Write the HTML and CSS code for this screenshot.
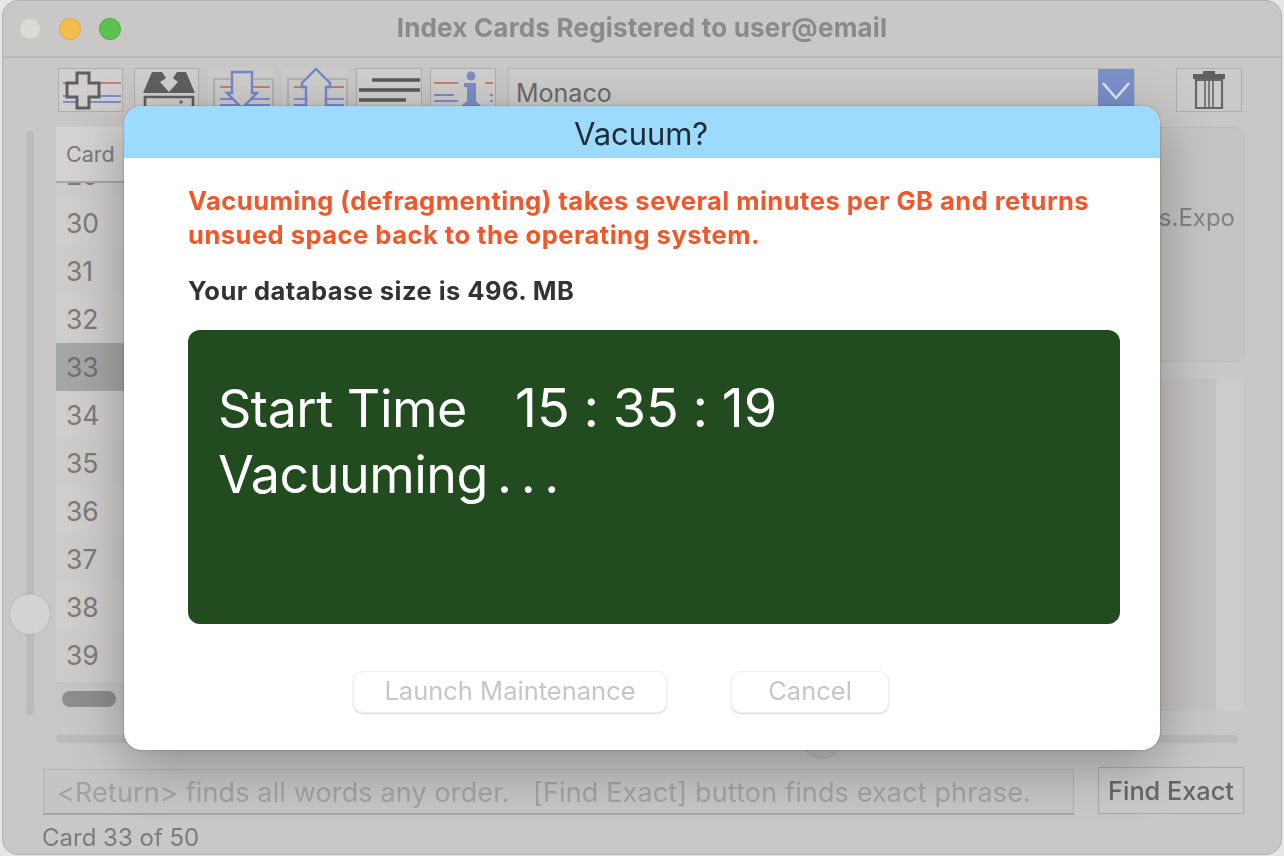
FILE: index.html
```html
<!DOCTYPE html>
<html lang="en">
<head>
<meta charset="utf-8">
<title>Index Cards</title>
<link rel="stylesheet" href="styles.css">
</head>
<body>
<div class="window">
  <header class="titlebar">
    <div class="lights"><span class="light close"></span><span class="light min"></span><span class="light max"></span></div>
    <div class="wintitle">Index Cards Registered to user@email</div>
  </header>
  <div class="toolbar">
    <div class="tools">
      <button class="tool boxed first">
        <svg width="64" height="42" viewBox="0 0 64 42"><path d="M4 14H62" class="red"/><path d="M4 27H62M4 33H62" class="blue"/><path d="M18 4H30V14H40V28H30V39H18V28H8V14H18Z" class="plus"/></svg>
      </button>
      <button class="tool boxed second">
        <svg width="64" height="42" viewBox="0 0 64 42"><path d="M17 3H27L31 9L25 13L34 23L43 13L38 9L42 3H51L60 24H8Z" class="solid"/><path d="M10 42V28H58V42" class="box"/><circle cx="46" cy="33" r="1.8" fill="#9a5a52"/></svg>
      </button>
      <button class="tool plain">
        <svg width="66" height="44" viewBox="0 0 66 44"><path d="M6 44V11H65V44" class="page"/><path d="M12 19H62" class="red"/><path d="M12 31H62M12 37H62" class="blue"/><path d="M24 4H44V25H49L34 40L19 25H24Z" class="arrow"/></svg>
      </button>
      <button class="tool plain">
        <svg width="66" height="44" viewBox="0 0 66 44"><path d="M6 44V11H65V44" class="page"/><path d="M12 19H62" class="red"/><path d="M12 31H62M12 37H62" class="blue"/><path d="M34 1L48 15V19H44V44H24V19H20V15Z" class="arrow"/></svg>
      </button>
      <button class="tool boxed full">
        <svg width="64" height="42" viewBox="0 0 64 42"><path d="M15 11H63M2 21H63M2 31H49" class="lines"/></svg>
      </button>
      <button class="tool boxed full">
        <svg width="64" height="42" viewBox="0 0 64 42"><path d="M3 14H27M54 14H62" class="red"/><path d="M3 26H23M3 32H27M59 26H62M59 32H62" class="blue"/><circle cx="40" cy="7" r="4.5" fill="#7f8cc8"/><path d="M33 14H45V32L51 38V42H29V38L36 32V18H33Z" fill="#7f8cc8"/></svg>
      </button>
    </div>
    <div class="combo">
      <span class="combo-text">Monaco</span>
      <span class="combo-arrow"><svg width="36" height="38" viewBox="0 0 36 38"><path d="M5 14L18 29L31 14" fill="none" stroke="#dfe5f4" stroke-width="2.6"/></svg></span>
    </div>
    <button class="trash">
      <svg width="34" height="38" viewBox="0 0 34 38"><path d="M1 3H33V8H1Z M11 0H23V3H11Z" fill="#5f5f5f"/><path d="M4 9H30V37H4Z" fill="none" stroke="#666" stroke-width="2.2"/><path d="M13 9V36M17 9V36M21 9V36" stroke="#666" stroke-width="1.6"/></svg>
    </button>
  </div>
  <main class="workspace">
    <div class="vslider"><span class="vknob"></span></div>
    <section class="table">
      <div class="cardcol">
        <div class="colhead">Card</div>
        <div class="rowsclip">
          <div class="rows">
            <div class="row">29</div>
            <div class="row">30</div>
            <div class="row">31</div>
            <div class="row">32</div>
            <div class="row sel">33</div>
            <div class="row">34</div>
            <div class="row">35</div>
            <div class="row">36</div>
            <div class="row">37</div>
            <div class="row">38</div>
            <div class="row">39</div>
          </div>
        </div>
        <div class="hscroll"><span class="pill"></span></div>
      </div>
      <div class="right">
        <div class="upper"><span class="upper-text">s.Expo</span></div>
        <div class="lower"><div class="lower-strip"></div></div>
      </div>
    </section>
  </main>
  <div class="hslider"><span class="hknob"></span></div>
  <div class="searchrow">
    <div class="search">&lt;Return&gt; finds all words any order. &nbsp; [Find Exact] button finds exact phrase.</div>
    <button class="find">Find Exact</button>
  </div>
  <div class="status">Card 33 of 50</div>
</div>

<div class="dialog">
  <div class="dialog-head">Vacuum?</div>
  <div class="dialog-body">
    <p class="warn">Vacuuming (defragmenting) takes several minutes per GB and returns<br>unsued space back to the operating system.</p>
    <p class="size">Your database size is 496. MB</p>
    <div class="console">
      <div class="console-line start">Start Time <span class="clock">15 : 35 : 19</span></div>
      <div class="console-line vac">Vacuuming . . .</div>
    </div>
    <div class="actions">
      <button class="btn wide">Launch Maintenance</button>
      <button class="btn narrow">Cancel</button>
    </div>
  </div>
</div>
</body>
</html>
```

FILE: styles.css
```css
* { box-sizing: border-box; }
html, body { margin: 0; height: 100%; }
body {
  width: 1284px;
  height: 856px;
  overflow: hidden;
  background: #e6e6e6;
  font-family: Inter, "Liberation Sans", sans-serif;
  padding: 0 2px 1px;
  position: relative;
}
button { font-family: inherit; padding: 0; margin: 0; }

.window {
  width: 1280px;
  height: 855px;
  background: #c9c8c6;
  border: 1px solid #b2b2b0;
  border-radius: 16px;
  overflow: hidden;
  display: flex;
  flex-direction: column;
  filter: blur(.55px);
}

.titlebar {
  height: 57px;
  flex: none;
  border-bottom: 2px solid #bab9b7;
  display: flex;
  align-items: center;
  position: relative;
  padding-left: 16px;
}
.lights { display: flex; gap: 18px; }
.light { width: 22px; height: 22px; border-radius: 50%; border: 1px solid rgba(0,0,0,.08); }
.close { background: #dcdad7; }
.min { background: #f3bd4c; }
.max { background: #5cc14f; }
.wintitle {
  position: absolute;
  left: 0; right: 0; top: 12px;
  text-align: center;
  font-size: 26px;
  letter-spacing: .2px;
  line-height: 30px;
  font-weight: 700;
  color: #8a8a88;
}

.toolbar {
  height: 69px;
  flex: none;
  display: flex;
  align-items: flex-start;
  padding: 10px 0 0 55px;
}
.tools { display: flex; gap: 8px; }
.tool { width: 66px; height: 44px; background: #d0cfcd; display: block; border: 0; overflow: hidden; flex: none; }
.tool svg { display: block; }
.tool.boxed { border: 1px solid #aeaeac; width: 65px; }
.tool.boxed.full { width: 66px; }
.tool.first { margin-right: 3px; }
.tool.second { margin-right: 1px; }
.tool.plain { background: #cdccca; }
.red { stroke: #c77f70; stroke-width: 2.2; fill: none; }
.blue { stroke: #7f8cd0; stroke-width: 2.2; fill: none; }
.plus { fill: #d0cfcd; stroke: #5f5f5f; stroke-width: 3; }
.solid { fill: #5f5f5f; }
.box { fill: none; stroke: #5f5f5f; stroke-width: 2.6; }
.page { fill: none; stroke: #aaa; stroke-width: 1.5; }
.arrow { fill: #cfcecc; stroke: #7486cf; stroke-width: 2.4; }
.lines { stroke: #5a5a5a; stroke-width: 3.6; fill: none; }

.combo {
  width: 627px;
  height: 44px;
  margin-left: 12px;
  background: #cecdcb;
  border: 1px solid #b9b8b6;
  display: flex;
  justify-content: space-between;
  color: #6a6a6a;
  font-size: 25px;
}
.combo-text { padding: 9px 0 0 7px; line-height: 30px; }
.combo-arrow { width: 36px; height: 44px; background: #7b91cb; flex: none; }
.combo-arrow svg { display: block; }
.trash {
  width: 66px;
  height: 44px;
  margin-left: 41px;
  background: #cccbc9;
  border: 1px solid #aeaeac;
  display: flex;
  align-items: center;
  justify-content: center;
}

.workspace {
  flex: none;
  height: 588px;
  display: flex;
  padding-left: 23px;
}
.vslider {
  width: 8px;
  height: 584px;
  margin-top: 4px;
  background: #bcbbba;
  border-radius: 4px;
  position: relative;
  flex: none;
}
.vknob {
  position: absolute;
  left: -16px;
  top: 463px;
  width: 40px;
  height: 40px;
  border-radius: 50%;
  background: #d4d3d2;
  box-shadow: 0 0 2px rgba(0,0,0,.2);
}
.table {
  margin-left: 22px;
  width: 1189px;
  height: 584px;
  display: flex;
}
.cardcol { width: 120px; height: 584px; display: flex; flex-direction: column; flex: none; }
.colhead {
  height: 56px;
  flex: none;
  background: #d4d3d1;
  border-bottom: 2px solid #a8a8a7;
  padding: 13px 0 0 10px;
  font-size: 21.5px;
  line-height: 28px;
  color: #7c7c7c;
}
.rowsclip { flex: none; height: 500px; overflow: hidden; background: #cdccca; }
.rows { margin-top: -32px; }
.row {
  height: 48px;
  padding-left: 10px;
  line-height: 48px;
  font-size: 26.5px;
  color: #7b7b7b;
}
.row:nth-child(even) { background: #cfcecc; }
.row.sel { background: #a6a6a5; color: #717171; }
.hscroll { height: 28px; background: #c8c7c5; border-top: 1px solid #bdbcba; padding: 7px 0 0 6px; flex: none; }
.pill { display: block; width: 54px; height: 16px; border-radius: 8px; background: #8e8e8d; }

.right { flex: 1; display: flex; flex-direction: column; margin-left: 40px; gap: 16px; }
.upper {
  height: 235px;
  flex: none;
  background: #c5c4c2;
  border: 1px solid #bfbebc;
  border-radius: 0 10px 10px 0;
  text-align: right;
  padding: 75px 9px 0 0;
  font-size: 24px;
  line-height: 30px;
  color: #828282;
}
.lower { height: 333px; flex: none; background: #c4c3c1; display: flex; justify-content: flex-end; padding-right: 1px; }
.lower-strip { width: 28px; background: #cdcccb; }

.hslider {
  flex: none;
  width: 1182px;
  height: 8px;
  margin: 20px 0 0 53px;
  background: #bcbbba;
  border-radius: 4px;
  position: relative;
}
.hknob {
  position: absolute;
  left: 747px;
  top: -15px;
  width: 38px;
  height: 38px;
  border-radius: 50%;
  background: #c0c0bf;
  box-shadow: 0 0 2px rgba(0,0,0,.35);
}

.searchrow { flex: none; display: flex; margin: 24px 0 0 40px; height: 47px; align-items: flex-start; }
.search {
  width: 1031px;
  height: 46px;
  margin-top: 2px;
  border: 1px solid #b4b3b1;
  border-bottom: 2px solid #a5a5a4;
  padding: 0 0 0 13px;
  line-height: 45px;
  font-size: 27px;
  letter-spacing: .14px;
  color: #a2a2a1;
  white-space: nowrap;
  background: #c6c5c3;
}
.find {
  width: 146px;
  height: 47px;
  margin-left: 24px;
  border: 1px solid #a9a9a8;
  background: #cac9c7;
  color: #666;
  font-size: 25.3px;
  font-weight: 500;
}
.status {
  flex: none;
  margin: 9px 0 0 39px;
  font-size: 24px;
  line-height: 30px;
  color: #7b7b7b;
}

.dialog {
  position: absolute;
  left: 124px;
  top: 106px;
  width: 1036px;
  height: 644px;
  background: #fff;
  border-radius: 18px;
  box-shadow: 0 14px 55px rgba(0,0,0,.3), 0 0 2px rgba(0,0,0,.4);
  display: flex;
  flex-direction: column;
  filter: blur(.3px);
}
.dialog-head {
  height: 52px;
  flex: none;
  background: #9cdbfd;
  border-radius: 18px 18px 0 0;
  text-align: center;
  font-size: 31px;
  line-height: 56px;
  padding-right: 2px;
  letter-spacing: -.1px;
  color: #202d36;
}
.dialog-body { flex: 1; padding: 26px 40px 0 64px; display: flex; flex-direction: column; }
.warn {
  margin: 0;
  font-size: 25.5px;
  letter-spacing: .5px;
  line-height: 34px;
  font-weight: 700;
  color: #f0572a;
  white-space: nowrap;
}
.size {
  margin: 24px 0 0;
  font-size: 25.5px;
  letter-spacing: .45px;
  line-height: 30px;
  font-weight: 700;
  color: #333;
}
.console {
  margin-top: 24px;
  height: 294px;
  background: #224b1f;
  border-radius: 12px;
  padding: 45px 0 0 30px;
  color: #fff;
  font-size: 52px;
  line-height: 66px;
  font-feature-settings: "calt" 0;
}
.console-line { white-space: nowrap; }
.start { letter-spacing: -.5px; }
.clock { margin-left: 34px; font-size: 54px; letter-spacing: 0; word-spacing: -1.5px; }
.vac { letter-spacing: -.5px; word-spacing: -5px; }
.actions { display: flex; margin: 47px 0 0 165px; gap: 64px; }
.btn {
  height: 42px;
  padding-bottom: 3px;
  background: #fff;
  border: 1px solid #f0f0f0;
  border-radius: 10px;
  box-shadow: 0 1px 2px rgba(0,0,0,.16);
  color: #c6c6c6;
  font-size: 25.5px;
}
.btn.wide { width: 314px; }
.btn.narrow { width: 158px; }
```
